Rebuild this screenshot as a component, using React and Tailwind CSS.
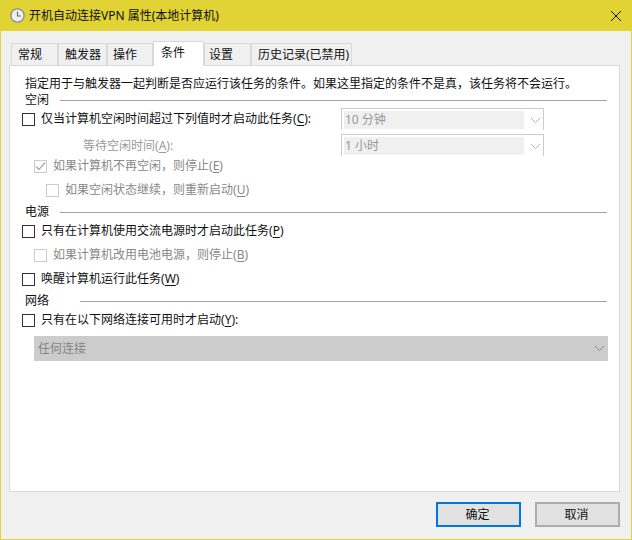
const font = { fontFamily: '"Noto Sans", "Noto Sans CJK SC", sans-serif' }

const tabs = [
  { label: '常规', w: 'w-[47px] pl-[6px]' },
  { label: '触发器', w: 'w-[49px] pl-[6px]' },
  { label: '操作', w: 'w-[46px] pl-[5px]' },
  { label: '条件', w: 'w-[51px] pl-[7px]', active: true },
  { label: '设置', w: 'w-[47px] pl-[4px]' },
  { label: '历史记录(已禁用)', w: 'w-[101px] pl-[6px]' },
]

function Key({ k }) {
  return (
    <>
      (<span className="underline underline-offset-2">{k}</span>)
    </>
  )
}

function Check({ checked, disabled }) {
  return (
    <span className={`flex h-[13px] w-[13px] shrink-0 items-center justify-center border bg-white ${disabled ? 'border-[#cccccc]' : 'border-[#333333]'}`}>
      {checked ? (
        <svg width="11" height="11" viewBox="0 0 11 11" fill="none" stroke="#aaaaaa" strokeWidth="1.2">
          <path d="M1 5.5 L4 8.5 L10 1.5" />
        </svg>
      ) : null}
    </span>
  )
}

function Row({ indent = 'pl-[12px]', checked, disabled, className = '', children }) {
  return (
    <div className={`flex items-center gap-[6px] ${indent} ${disabled ? 'text-[#888888]' : 'text-[#111111]'} ${className}`}>
      <Check checked={checked} disabled={disabled} />
      <span>{children}</span>
    </div>
  )
}

function Section({ label, lineWidth, className = '' }) {
  return (
    <div className={`flex h-[16px] items-center justify-between pl-[15px] pr-[12px] text-[#111111] ${className}`}>
      <span>{label}</span>
      <span className={`h-px bg-[#a0a0a0] ${lineWidth}`} />
    </div>
  )
}

function Chevron({ color }) {
  return (
    <svg width="11" height="7" viewBox="0 0 11 7" fill="none" stroke={color} strokeWidth="1">
      <path d="M1 1 L5.5 5.5 L10 1" />
    </svg>
  )
}

function Combo({ value }) {
  return (
    <div className="flex h-[22px] w-[203px] items-start border-x border-t border-[#cccccc] pl-[2px] pt-[2px]">
      <span className="flex h-[18px] w-[180px] items-center bg-[#f0f0f0] pl-[1px] text-[#999999]">{value}</span>
      <span className="ml-[6px] mt-[6px]">
        <Chevron color="#b5b5b5" />
      </span>
    </div>
  )
}

export default function App() {
  return (
    <div style={font} className="flex h-[540px] w-[632px] flex-col overflow-hidden border-x border-b border-[#e0d333] bg-[#f0f0f0] text-[12px] leading-[16px]">
      <div className="flex h-[31px] shrink-0 items-center justify-between bg-[#e0d333] pl-[9px] pr-[9px] text-[#111111]">
        <div className="flex items-center gap-[4px]">
          <svg width="15" height="15" viewBox="0 0 15 15">
            <circle cx="7.5" cy="7.5" r="6.6" fill="#eef0f2" stroke="#8b8f96" strokeWidth="1.4" />
            <path d="M7.5 3.5 V8 H11" fill="none" stroke="#666666" strokeWidth="1.1" />
          </svg>
          <span className="text-[12px]">开机自动连接VPN 属性(本地计算机)</span>
        </div>
        <svg width="12" height="12" viewBox="0 0 12 12" stroke="#111111" strokeWidth="1">
          <path d="M1 1 L11 11 M11 1 L1 11" />
        </svg>
      </div>

      <div className="flex flex-1 flex-col px-[8px]">
        <div className="relative z-10 mt-[10px] flex h-[24px] items-end pl-[2px]">
          {tabs.map((t) => (
            <div
              key={t.label}
              className={`flex shrink-0 items-center border-x border-t border-[#d9d9d9] text-[#111111] ${t.w} ${
                t.active ? '-mb-px h-[25px] bg-white pb-[3px]' : 'h-[22px] bg-[#f0f0f0]'
              }`}
            >
              {t.label}
            </div>
          ))}
        </div>

        <div className="h-[427px] w-[611px] border border-[#d9d9d9] bg-white pt-[10px]">
          <p className="pl-[15px] text-[#111111]">
            指定用于与触发器一起判断是否应运行该任务的条件。如果这里指定的条件不是真，该任务将不会运行。
          </p>
          <Section label="空闲" lineWidth="w-[547px]" />

          <div className="flex items-start">
            <div className="w-[331px]">
              <Row className="mt-[3px]">
                仅当计算机空闲时间超过下列值时才启动此任务
                <Key k="C" />:
              </Row>
              <div className="mt-[11px] pl-[73px] text-[#9a9a9a]">
                等待空闲时间
                <Key k="A" />:
              </div>
            </div>
            <div className="flex flex-col gap-[4px]">
              <Combo value="10 分钟" />
              <Combo value="1 小时" />
            </div>
          </div>

          <Row indent="pl-[24px]" checked disabled className="mt-[2px]">
            如果计算机不再空闲，则停止
            <Key k="E" />
          </Row>
          <Row indent="pl-[36px]" disabled className="mt-[8px]">
            如果空闲状态继续，则重新启动
            <Key k="U" />
          </Row>

          <Section label="电源" lineWidth="w-[547px]" className="mt-[6px]" />
          <Row className="mt-[3px]">
            只有在计算机使用交流电源时才启动此任务
            <Key k="P" />
          </Row>
          <Row indent="pl-[24px]" disabled className="mt-[8px]">
            如果计算机改用电池电源，则停止
            <Key k="B" />
          </Row>
          <Row className="mt-[8px]">
            唤醒计算机运行此任务
            <Key k="W" />
          </Row>

          <Section label="网络" lineWidth="w-[527px]" className="mt-[6px]" />
          <Row className="mt-[3px]">
            只有在以下网络连接可用时才启动
            <Key k="Y" />:
          </Row>

          <div className="ml-[24px] mt-[8px] flex h-[25px] w-[574px] items-center justify-between bg-[#cccccc] pl-[4px] pr-[3px] text-[#858585]">
            <span>任何连接</span>
            <Chevron color="#8a8a8a" />
          </div>
        </div>

        <div className="mt-[10px] flex justify-end gap-[14px] pr-[3px]">
          <button type="button" className="h-[25px] w-[85px] border-2 border-[#0078d7] bg-[#e1e1e1] pr-[2px] text-[#111111]">
            确定
          </button>
          <button type="button" className="h-[25px] w-[85px] border-2 border-[#adadad] bg-[#e1e1e1] pr-[2px] text-[#111111]">
            取消
          </button>
        </div>
      </div>
    </div>
  )
}
